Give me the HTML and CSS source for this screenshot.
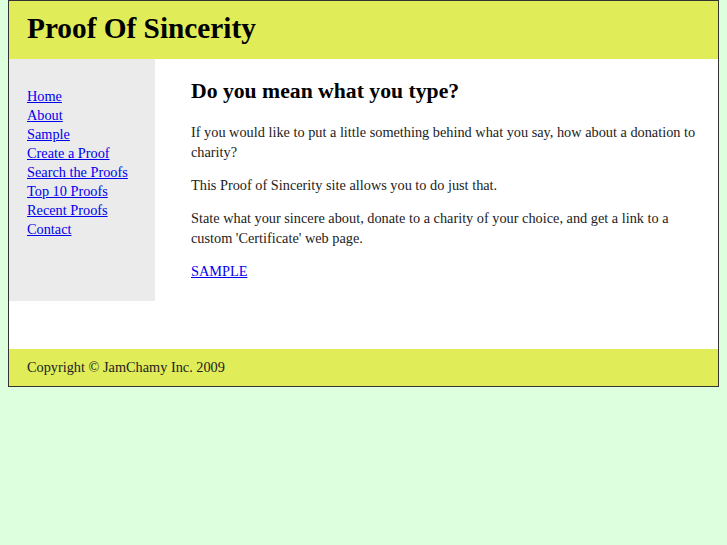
FILE: index.html
```html
<!DOCTYPE html>
<html>
<head>
<meta charset="utf-8">
<title>Proof Of Sincerity</title>
<link rel="stylesheet" href="styles.css">
</head>
<body>
<div class="page">
  <header class="header">
    <h1 class="title">Proof Of Sincerity</h1>
  </header>
  <div class="middle">
    <nav class="sidebar">
      <a href="#">Home</a>
      <a href="#">About</a>
      <a href="#">Sample</a>
      <a href="#">Create a Proof</a>
      <a href="#">Search the Proofs</a>
      <a href="#">Top 10 Proofs</a>
      <a href="#">Recent Proofs</a>
      <a href="#">Contact</a>
    </nav>
    <main class="content">
      <h2 class="heading">Do you mean what you type?</h2>
      <p>If you would like to put a little something behind what you say, how about a donation to charity?</p>
      <p>This Proof of Sincerity site allows you to do just that.</p>
      <p>State what your sincere about, donate to a charity of your choice, and get a link to a custom 'Certificate' web page.</p>
      <p><a href="#">SAMPLE</a></p>
    </main>
  </div>
  <footer class="footer">Copyright © JamChamy Inc. 2009</footer>
</div>
</body>
</html>
```
FILE: styles.css
```css
html, body {
  background: #ddffdd;
}
body {
  margin: 0 8px;
  font-family: "Liberation Serif", "Times New Roman", serif;
  font-size: 14.3px;
  color: #222;
}
.page {
  border: 1px solid #333;
  background: #fff;
}
.header {
  background: #e0ec58;
  height: 58px;
  padding: 10px 18px 0;
  box-sizing: border-box;
}
.title {
  margin: 0;
  font-size: 29.3px;
  line-height: 34px;
  font-weight: bold;
  color: #000;
}
.middle {
  display: flex;
  align-items: flex-start;
}
.sidebar {
  width: 146px;
  flex: none;
  box-sizing: border-box;
  background: #ebebeb;
  padding: 28px 0 62px 18px;
  display: flex;
  flex-direction: column;
}
.sidebar a {
  line-height: 19px;
  color: #0000ee;
}
.content {
  flex: 1;
  padding: 19px 20px 68px 36px;
}
.heading {
  margin: 0 0 18px;
  font-size: 21.7px;
  line-height: 26px;
  font-weight: bold;
  color: #000;
}
.content p {
  margin: 0 0 13px;
  line-height: 20px;
}
.content p:last-child {
  margin-bottom: 0;
}
.content a {
  color: #0000ee;
}
.footer {
  background: #e0ec58;
  padding: 8px 18px 9px;
  line-height: 20px;
}
```
